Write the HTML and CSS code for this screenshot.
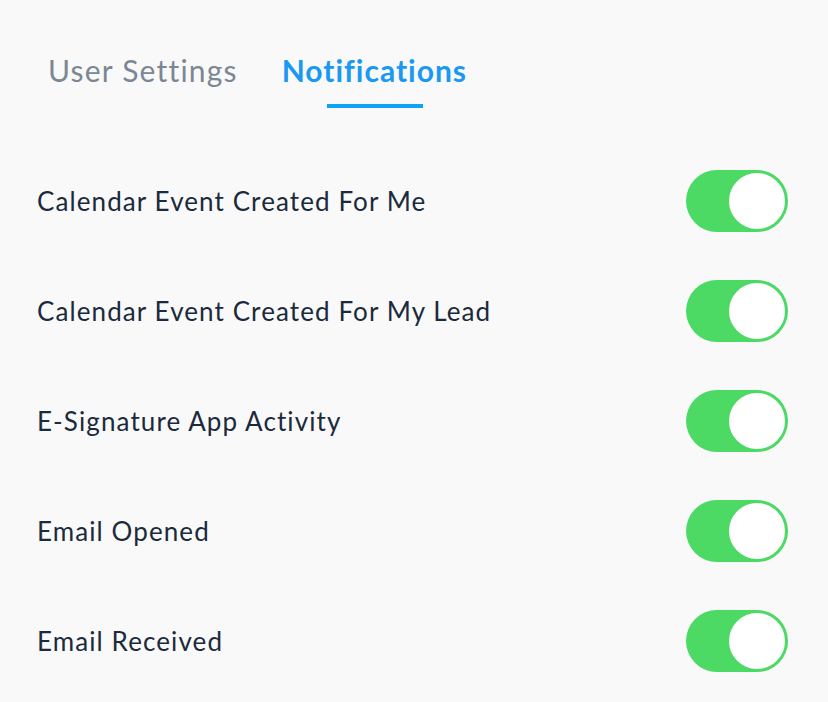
FILE: index.html
```html
<!DOCTYPE html>
<html lang="en">

<head>
  <meta charset="UTF-8">
  <title>Notifications</title>
  <link rel="stylesheet" href="styles.css">
</head>

<body>
  <div class="tabs">
    <div class="tab">User Settings</div>
    <div class="tab active">Notifications</div>
  </div>

  <div class="settings-list">
    <div class="setting-row">
      <span class="setting-label">Calendar Event Created For Me</span>
      <label class="switch"><input type="checkbox" checked><span class="slider"></span></label>
    </div>
    <div class="setting-row">
      <span class="setting-label">Calendar Event Created For My Lead</span>
      <label class="switch"><input type="checkbox" checked><span class="slider"></span></label>
    </div>
    <div class="setting-row">
      <span class="setting-label">E-Signature App Activity</span>
      <label class="switch"><input type="checkbox" checked><span class="slider"></span></label>
    </div>
    <div class="setting-row">
      <span class="setting-label">Email Opened</span>
      <label class="switch"><input type="checkbox" checked><span class="slider"></span></label>
    </div>
    <div class="setting-row">
      <span class="setting-label">Email Received</span>
      <label class="switch"><input type="checkbox" checked><span class="slider"></span></label>
    </div>
  </div>
</body>

</html>
```

FILE: styles.css
```css
body {
  margin: 0;
  background-color: #f9f9f9;
  font-family: Lato, "Noto Sans", sans-serif;
  color: #1b2a3c;
}

.tabs {
  display: flex;
  gap: 44px;
  padding: 52px 0 0 48px;
}

.tab {
  font-size: 30px;
  letter-spacing: 1.2px;
  color: #7b8794;
  padding-bottom: 20px;
  position: relative;
}

.tab.active {
  color: #1a98f2;
  font-weight: 700;
  letter-spacing: 1px;
}

.tab.active::after {
  content: "";
  position: absolute;
  left: 45px;
  bottom: 0;
  width: 96px;
  height: 4px;
  background-color: #0fa3f5;
}

.settings-list {
  padding: 38px 40px 0 37px;
}

.setting-row {
  display: flex;
  justify-content: space-between;
  align-items: center;
  height: 110px;
}

.setting-label {
  font-size: 26px;
  letter-spacing: 1.1px;
}

.switch {
  position: relative;
  width: 102px;
  height: 62px;
}

.switch input {
  display: none;
}

.slider {
  position: absolute;
  inset: 0;
  background-color: #4cd964;
  border-radius: 31px;
}

.slider::before {
  content: "";
  position: absolute;
  right: 1px;
  top: 1px;
  width: 56px;
  height: 56px;
  border: 2px solid #4cd964;
  border-radius: 50%;
  background-color: #fff;
}
```
